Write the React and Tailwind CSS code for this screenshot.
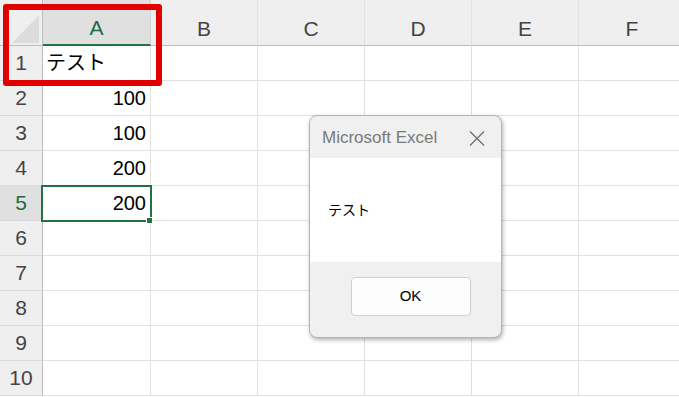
import React from 'react';

const cols = ['A', 'B', 'C', 'D', 'E', 'F'];
const cells = {
  1: 'テスト',
  2: '100',
  3: '100',
  4: '200',
  5: '200',
};

const colWidth = (c) => (c === 'A' ? 'w-[108px]' : 'w-[107px]');

const HeaderRow = () => (
  <div className="flex h-[46px] shrink-0 bg-[#efefef]">
    <div className="relative w-[43px] shrink-0 border-r border-b border-[#bdbdbd]">
      {/* select-all triangle */}
      <svg className="absolute left-[12px] top-[15px]" width="27" height="28" viewBox="0 0 27 28">
        <polygon points="27,0 27,28 0,28" fill="#dcdcdc" />
      </svg>
    </div>
    {cols.map((c) =>
      c === 'A' ? (
        <div
          key={c}
          className={`${colWidth(c)} shrink-0 flex items-center justify-center border-r border-[#d4d4d4] border-b-2 border-b-[#217346] bg-[#e0e0e0] text-[#1e6b43] text-[21px] pt-[11px]`}
        >
          {c}
        </div>
      ) : (
        <div
          key={c}
          className={`${colWidth(c)} shrink-0 flex items-center justify-center border-r border-[#e2e2e2] border-b border-b-[#bdbdbd] text-[#444] text-[21px] pt-[12px]`}
        >
          {c}
        </div>
      )
    )}
  </div>
);

const Row = ({ n }) => {
  const value = cells[n];
  const isNumber = value && /^\d+$/.test(value);
  const selected = n === 5;
  return (
    <div className="flex h-[35px] shrink-0">
      <div
        className={`w-[43px] shrink-0 flex items-center justify-center border-r border-r-[#bdbdbd] border-b border-b-[#dadada] text-[21px] ${
          selected ? 'bg-[#e0e0e0] text-[#1e6b43]' : 'bg-[#efefef] text-[#444]'
        }`}
      >
        {n}
      </div>
      {cols.map((c) => (
        <div
          key={c}
          className={`${colWidth(c)} shrink-0 flex items-center border-r border-b border-[#e1e1e1] text-[20px] text-black ${
            isNumber ? 'justify-end pr-[4px]' : 'justify-start pl-[3px]'
          }`}
        >
          {c === 'A' ? value : null}
        </div>
      ))}
    </div>
  );
};

const Dialog = () => (
  <div className="absolute left-[309px] top-[115px] w-[193px] h-[223px] rounded-[8px] border border-[#b4b4b4] bg-[#f0f0f0] shadow-[1px_2px_4px_rgba(0,0,0,0.3)] flex flex-col overflow-hidden">
    <div className="h-[42px] flex items-center justify-between pl-[12px] pr-[16px] pt-[2px]">
      <span className="text-[17px] text-[#7a7a7a]">Microsoft Excel</span>
      <svg width="16" height="15" viewBox="0 0 16 15">
        <path d="M1 0.5 L15 14.5 M15 0.5 L1 14.5" stroke="#707070" strokeWidth="1.3" fill="none" />
      </svg>
    </div>
    <div className="h-[104px] bg-white flex items-center pl-[18px]">
      <span className="text-[14px] text-black">テスト</span>
    </div>
    <div className="flex-1 flex justify-center pt-[15px] pl-[10px]">
      <button className="w-[120px] h-[39px] rounded-[4px] border border-[#d0d0d0] bg-[#fdfdfd] text-[15px] text-black">
        OK
      </button>
    </div>
  </div>
);

export default function App() {
  return (
    <div
      className="relative w-[679px] h-[397px] overflow-hidden bg-white"
      style={{ fontFamily: '"Liberation Sans", "Noto Sans CJK JP", sans-serif' }}
    >
      <div className="flex flex-col">
        <HeaderRow />
        {[1, 2, 3, 4, 5, 6, 7, 8, 9, 10].map((n) => (
          <Row key={n} n={n} />
        ))}
      </div>

      {/* active cell A5 */}
      <div className="absolute left-[41px] top-[185px] w-[111px] h-[37px] border-2 border-[#217346]" />
      <div className="absolute left-[146px] top-[217px] w-[7px] h-[7px] bg-[#217346] border border-white" />

      {/* red highlight box */}
      <div className="absolute left-[3px] top-[4px] w-[159px] h-[82px] border-[6px] border-[#e00000] rounded-[3px]" />

      <Dialog />
    </div>
  );
}
